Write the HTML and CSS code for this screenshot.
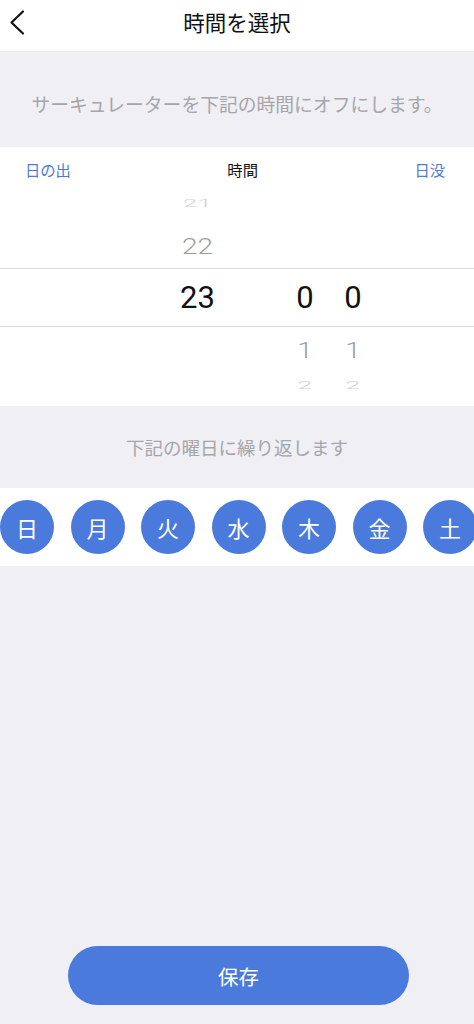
FILE: index.html
```html
<!DOCTYPE html>
<html lang="ja">
<head>
<meta charset="utf-8">
<title>時間を選択</title>
<link rel="stylesheet" href="styles.css">
</head>
<body>
<div class="app">
  <header class="header">
    <button class="back" aria-label="戻る">
      <svg width="20" height="28" viewBox="0 0 20 28"><path d="M15 2.5 L3.5 13.5 L15 24.5" fill="none" stroke="#111" stroke-width="2.2" stroke-linecap="round" stroke-linejoin="round"/></svg>
    </button>
    <h1 class="title">時間を選択</h1>
  </header>

  <section class="note note-top">サーキュレーターを下記の時間にオフにします。</section>

  <section class="picker-card">
    <div class="tabs">
      <span class="tab tab-link">日の出</span>
      <span class="tab tab-active">時間</span>
      <span class="tab tab-link">日没</span>
    </div>
    <div class="wheel">
      <div class="row row-far row-top">
        <span class="c1">21</span>
      </div>
      <div class="row row-near">
        <span class="c1">22</span>
      </div>
      <div class="row row-sel">
        <span class="c1">23</span>
        <span class="c2">0</span>
        <span class="c3">0</span>
      </div>
      <div class="row row-near">
        <span class="c2">1</span>
        <span class="c3">1</span>
      </div>
      <div class="row row-far row-bottom">
        <span class="c2">2</span>
        <span class="c3">2</span>
      </div>
    </div>
  </section>

  <section class="note note-days">下記の曜日に繰り返します</section>

  <section class="days">
    <span class="day">日</span>
    <span class="day">月</span>
    <span class="day">火</span>
    <span class="day">水</span>
    <span class="day">木</span>
    <span class="day">金</span>
    <span class="day">土</span>
  </section>

  <div class="spacer"></div>

  <footer class="footer">
    <button class="save">保存</button>
  </footer>
</div>
</body>
</html>
```

FILE: styles.css
```css
* { box-sizing: border-box; }

html, body {
  margin: 0;
  padding: 0;
}

body {
  font-family: "Noto Sans CJK JP", "Liberation Sans", sans-serif;
  background: #efeff4;
  color: #111;
}

.app {
  display: flex;
  flex-direction: column;
  height: 1024px;
  width: 474px;
  overflow: hidden;
}

.header {
  height: 52px;
  background: #ffffff;
  display: flex;
  align-items: center;
  justify-content: center;
  position: relative;
  border-bottom: 1px solid #ececf0;
}

.back {
  position: absolute;
  left: 8px;
  top: 9px;
  width: 20px;
  height: 28px;
  padding: 0;
  border: 0;
  background: none;
}

.back svg { display: block; }

.title {
  margin: 0;
  font-size: 21.5px;
  font-weight: 400;
  line-height: 1;
  padding-bottom: 7px;
  color: #111;
}

.note {
  display: flex;
  align-items: center;
  justify-content: center;
  color: #a6a6aa;
  font-size: 18.8px;
  letter-spacing: 0;
}

.note-top {
  height: 95px;
  padding-top: 8px;
}

.note-days {
  height: 82px;
  font-size: 18.5px;
  padding-bottom: 1px;
}

.picker-card {
  background: #ffffff;
  height: 259px;
}

.tabs {
  height: 48px;
  display: flex;
  align-items: center;
  justify-content: space-between;
  padding: 0 29px 4px 25px;
  font-size: 15.3px;
}

.tab-link { color: #4a7bd8; }
.tab-active { color: #111; }

.wheel {
  display: flex;
  flex-direction: column;
}

.row {
  display: grid;
  grid-template-columns: 160px 75px 50px 40px 8px 40px;
  align-items: center;
  font-family: "Roboto", "Liberation Sans", sans-serif;
  font-weight: 300;
  line-height: 1;
  overflow: hidden;
}

.row span { text-align: center; }
.c1 { grid-column: 2; }
.c2 { grid-column: 4; }
.c3 { grid-column: 6; }

.row-far {
  color: #d2d2d2;
  font-size: 26px;
}

.row-top {
  height: 26px;
  align-items: start;
}
.row-top span {
  transform: scaleY(0.42);
  transform-origin: center 0;
  margin-top: 3px;
}

.row-bottom {
  height: 19px;
}
.row-bottom span {
  transform: scaleY(0.4);
  transform-origin: center 20%;
  padding-top: 4px;
}

.row-near {
  color: #9c9c9c;
  font-size: 28px;
  height: 47px;
}
.row-near span { transform: scaleY(0.82); }

.row-top + .row-near span { margin-top: 4px; }

.row-sel {
  height: 59px;
  border-top: 1px solid #dcdcdc;
  border-bottom: 1px solid #dcdcdc;
  font-size: 31px;
  font-weight: 400;
  color: #111;
}

.row-sel + .row-near { height: 48px; }

.days {
  background: #ffffff;
  height: 78px;
  display: flex;
  align-items: center;
  gap: 16.5px;
}

.day {
  flex: 0 0 54px;
  width: 54px;
  height: 54px;
  border-radius: 50%;
  background: #4a7adb;
  color: #ffffff;
  display: flex;
  align-items: center;
  justify-content: center;
  font-size: 22px;
  line-height: 1;
}

.spacer { flex: 1; }

.footer {
  display: flex;
  justify-content: center;
  padding: 0 0 19px 3px;
}

.save {
  width: 341px;
  height: 59px;
  border: 0;
  border-radius: 30px;
  background: #4a7adb;
  color: #ffffff;
  font-family: "Noto Sans CJK JP", sans-serif;
  font-size: 20.5px;
  padding: 0;
}
```
